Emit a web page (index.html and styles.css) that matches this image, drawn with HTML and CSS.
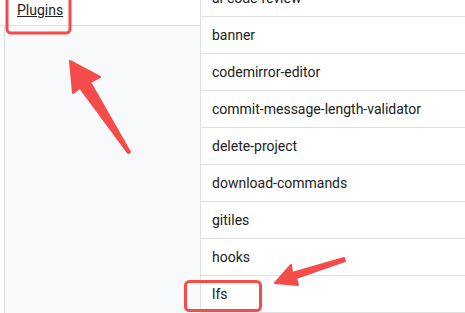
FILE: index.html
```html
<!DOCTYPE html>
<html lang="en">
<head>
  <meta charset="UTF-8">
  <meta name="viewport" content="width=device-width, initial-scale=1.0">
  <title>Plugins</title>
  <link rel="stylesheet" href="styles.css">
</head>
<body>
<div class="page">
  <!-- Navegação lateral -->
  <div class="sidenav">
    <div class="sidenav-head"><a href="#">Plugins</a></div>
    <div class="sidenav-body"></div>
  </div>

  <!-- Lista de plugins -->
  <div class="plugin-list">
    <div class="plugin">ai-code-review</div>
    <div class="plugin">banner</div>
    <div class="plugin">codemirror-editor</div>
    <div class="plugin">commit-message-length-validator</div>
    <div class="plugin">delete-project</div>
    <div class="plugin">download-commands</div>
    <div class="plugin">gitiles</div>
    <div class="plugin">hooks</div>
    <div class="plugin">lfs</div>
  </div>
</div>

<!-- Anotações -->
<svg class="marks" width="465" height="313" viewBox="0 0 465 313">
  <rect x="7" y="-6" width="63" height="39" rx="4" fill="none" stroke="#f44b4b" stroke-width="3"/>
  <rect x="185.5" y="281.5" width="75" height="29" rx="4" fill="none" stroke="#f44b4b" stroke-width="3"/>
  <polygon points="70,61 100,77 90,82 130,152 128,153 80,88 73,93" fill="#f44b4b" stroke="#f44b4b" stroke-width="2" stroke-linejoin="round"/>
  <polygon points="275,283 291,265 292,273 344,258 345,261 296,278 298,285" fill="#f44b4b" stroke="#f44b4b" stroke-width="2" stroke-linejoin="round"/>
</svg>
</body>
</html>
```

FILE: styles.css
```css
/* Estilos gerais */
body {
  margin: 0;
  font-family: Roboto, 'Liberation Sans', sans-serif;
  font-size: 14px;
  color: #212121;
  background: #fff;
  overflow: hidden;
}
.page {
  display: flex;
  height: 313px;
}
/* Navegação lateral */
.sidenav {
  width: 200px;
  display: flex;
  flex-direction: column;
}
.sidenav-head {
  height: 26px;
  border-bottom: 1px solid #e0e0e0;
  padding-left: 17px;
  box-sizing: border-box;
}
.sidenav-head a {
  color: #212121;
  line-height: 20px;
  text-decoration: underline;
}
.sidenav-body {
  flex: 1;
  margin-left: 4px;
  border-left: 1px solid #dadce0;
  background: #f8f9fa;
}
/* Lista de plugins */
.plugin-list {
  flex: 1;
  border-left: 1px solid #e0e0e0;
  margin-top: -20px;
}
.plugin {
  height: 36px;
  line-height: 36px;
  padding-left: 11px;
  border-bottom: 1px solid #e0e0e0;
}
/* Anotações */
.marks {
  position: absolute;
  left: 0;
  top: 0;
}
```
